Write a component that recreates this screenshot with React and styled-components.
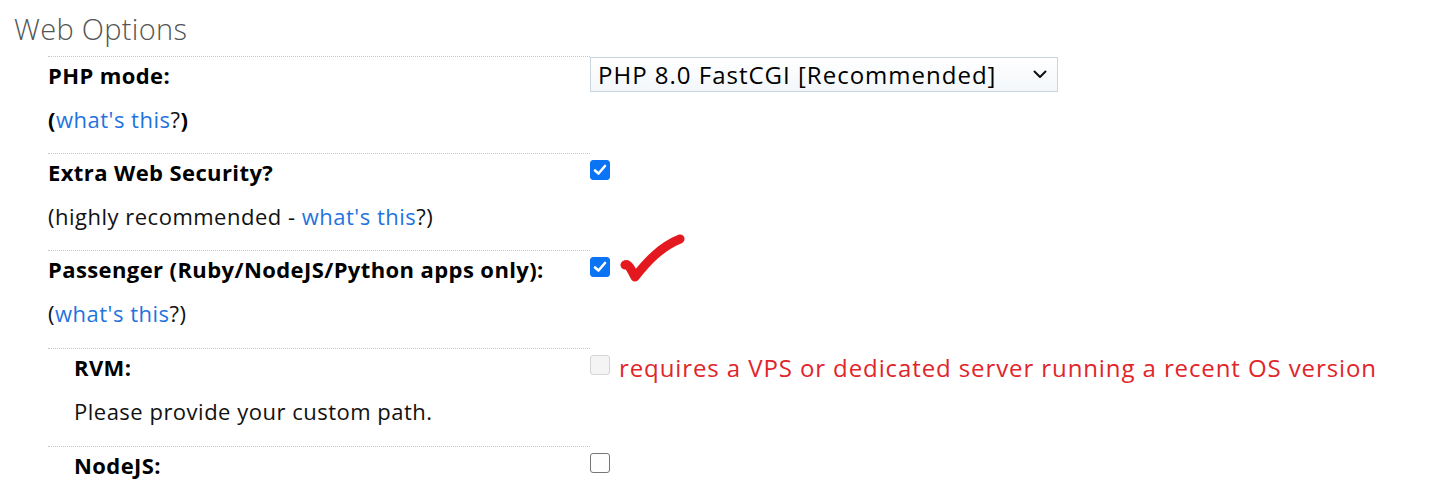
import React from "react";
import styled, { createGlobalStyle } from "styled-components";

const Global = createGlobalStyle`
  html, body { margin: 0; padding: 0; background: #fff; }
  body { font-family: "Open Sans", "Liberation Sans", sans-serif; color: #111; }
`;

const Page = styled.div`
  padding: 10px 0 0 14px;
  height: 487px;
  overflow: hidden;
  box-sizing: border-box;
`;

const Title = styled.h2`
  margin: 0 0 8px;
  font-family: "Open Sans", sans-serif;
  font-weight: 300;
  font-size: 29px;
  letter-spacing: 0.3px;
  line-height: 38px;
  color: #555;
`;

const Table = styled.div`
  margin-left: 34px;
  display: flex;
  flex-direction: column;
`;

const Row = styled.div`
  display: grid;
  grid-template-columns: 542px 1fr;
`;

const LabelCell = styled.div`
  border-top: 1px dotted #c4c8cc;
  padding: 6px 0 ${(p) => p.$bottom ?? 22}px ${(p) => (p.$indent ? "26px" : "0")};
  font-size: 22px;
  line-height: 24px;
  letter-spacing: 0.5px;
`;

const Label = styled.div`
  font-weight: 700;
  letter-spacing: 0.4px;
  color: #000;
  margin-bottom: 20px;
`;

const Desc = styled.div`
  color: #111;
`;

const Paren = styled.span`
  font-weight: ${(p) => (p.$bold ? 700 : 400)};
  color: #000;
`;

const Link = styled.a`
  color: #1f74e0;
  text-decoration: none;
`;

const ControlCell = styled.div`
  padding-top: ${(p) => p.$top ?? 7}px;
  display: flex;
  align-items: flex-start;
  gap: 9px;
  position: relative;
`;

const Select = styled.div`
  width: 468px;
  height: 35px;
  box-sizing: border-box;
  border: 1px solid #c9d5df;
  background: linear-gradient(#ffffff, #f3f7fa);
  display: flex;
  align-items: center;
  justify-content: space-between;
  padding: 0 10px 0 7px;
  font-size: 24px;
  letter-spacing: 1px;
  color: #000;
`;

const Box = styled.span`
  display: inline-flex;
  align-items: center;
  justify-content: center;
  width: 20px;
  height: 20px;
  box-sizing: border-box;
  border-radius: 3px;
  flex: none;
  ${(p) =>
    p.$checked
      ? `background: #0a74f4; border: 1px solid #0a74f4;`
      : p.$disabled
      ? `background: #f4f4f4; border: 1px solid #d4d4d4;`
      : `background: #fff; border: 1.5px solid #767676;`}
`;

const Warning = styled.span`
  color: #e0252b;
  font-size: 24px;
  letter-spacing: 0.9px;
  line-height: 20px;
  padding-top: 3px;
`;

const Annotation = styled.svg`
  position: absolute;
  left: 28px;
  top: -17px;
`;

const Check = () => (
  <svg width="14" height="12" viewBox="0 0 14 12">
    <path d="M2 6.5 L5.5 9.5 L12 2" fill="none" stroke="#fff" strokeWidth="2.6" strokeLinecap="round" strokeLinejoin="round" />
  </svg>
);

const Checkbox = ({ checked, disabled }) => (
  <Box $checked={checked} $disabled={disabled}>{checked && <Check />}</Box>
);

const Chevron = () => (
  <svg width="14" height="9" viewBox="0 0 14 9">
    <path d="M1.5 1.5 L7 7 L12.5 1.5" fill="none" stroke="#111" strokeWidth="2" strokeLinecap="round" strokeLinejoin="round" />
  </svg>
);

export default function App() {
  return (
    <>
      <Global />
      <Page>
        <Title>Web Options</Title>
        <Table>
          <Row>
            <LabelCell>
              <Label>PHP mode:</Label>
              <Desc>
                <Paren $bold>(</Paren>
                <Link href="#">what's this</Link>?<Paren $bold>)</Paren>
              </Desc>
            </LabelCell>
            <ControlCell $top={1}>
              <Select>
                <span>PHP 8.0 FastCGI [Recommended]</span>
                <Chevron />
              </Select>
            </ControlCell>
          </Row>
          <Row>
            <LabelCell>
              <Label>Extra Web Security?</Label>
              <Desc>
                (highly recommended - <Link href="#">what's this</Link>?)
              </Desc>
            </LabelCell>
            <ControlCell>
              <Checkbox checked />
            </ControlCell>
          </Row>
          <Row>
            <LabelCell $bottom={23}>
              <Label>Passenger (Ruby/NodeJS/Python apps only):</Label>
              <Desc>
                (<Link href="#">what's this</Link>?)
              </Desc>
            </LabelCell>
            <ControlCell>
              <Checkbox checked />
              <Annotation width="70" height="58" viewBox="0 0 70 58">
                <path d="M7 32 C10 30 13 36 17 44 C28 30 42 14 62 6" fill="none" stroke="#e3191f" strokeWidth="9" strokeLinecap="round" strokeLinejoin="round" />
              </Annotation>
            </ControlCell>
          </Row>
          <Row>
            <LabelCell $indent $bottom={23}>
              <Label>RVM:</Label>
              <Desc>Please provide your custom path.</Desc>
            </LabelCell>
            <ControlCell>
              <Checkbox disabled />
              <Warning>requires a VPS or dedicated server running a recent OS version</Warning>
            </ControlCell>
          </Row>
          <Row>
            <LabelCell $indent $bottom={23}>
              <Label>NodeJS:</Label>
              <Desc>&nbsp;</Desc>
            </LabelCell>
            <ControlCell>
              <Checkbox />
            </ControlCell>
          </Row>
        </Table>
      </Page>
    </>
  );
}
